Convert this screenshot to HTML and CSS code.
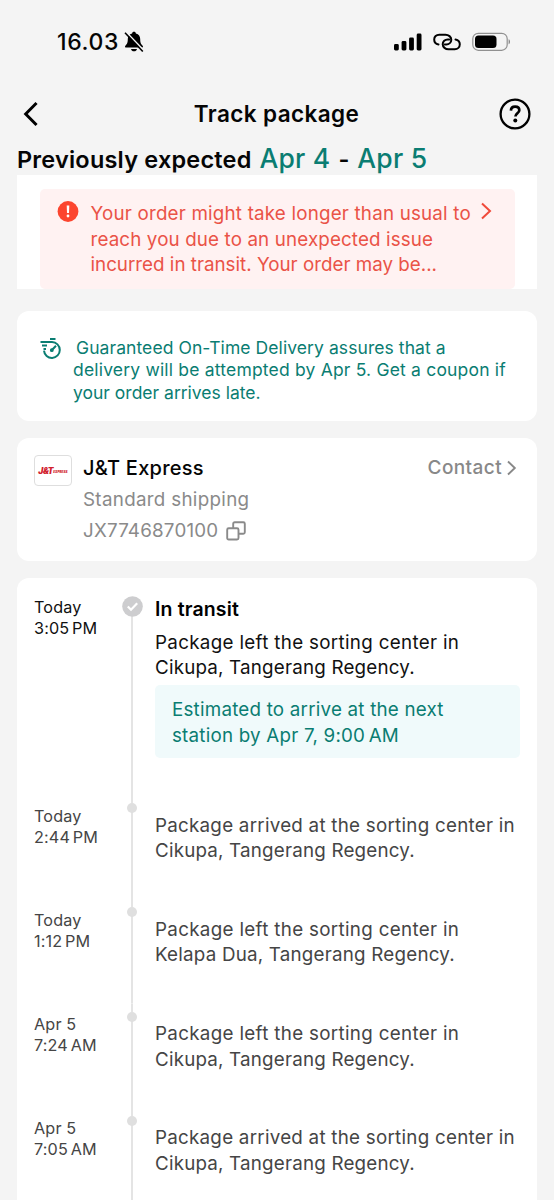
FILE: index.html
```html
<!DOCTYPE html>
<html lang="en">
<head>
<meta charset="utf-8">
<title>Track package</title>
<link rel="stylesheet" href="styles.css">
</head>
<body>
<header class="status">
  <span class="clock">16.03</span>
  <svg class="bell" width="20" height="22" viewBox="0 0 20 22"><path d="M10 .8c1.100 0 1.800.7 1.900 1.600 2.900.8 4.300 2.900 4.300 5.600 0 4 .9 5.200 2.500 6.800.6.800.2 1.800-.8 1.800H2.100c-1 0-1.400-1-.8-1.800C2.900 13.200 3.800 12 3.800 8c0-2.700 1.400-4.800 4.300-5.600.1-.9.800-1.600 1.900-1.600zM7 18h6c-.3 1.400-1.500 2.300-3 2.300S7.300 19.400 7 18z"/><path d="M2.200 1 20 19.700" stroke="#f4f4f4" stroke-width="1.500"/><path d="M1 1.700 18.800 20.500" stroke="#000" stroke-width="1.600"/></svg>
  <span class="spacer"></span>
  <svg width="28" height="18" viewBox="0 0 28 18"><rect x="0" y="11" width="4.800" height="6.500" rx="1.400"/><rect x="7.600" y="8" width="4.800" height="9.500" rx="1.400"/><rect x="15.100" y="4.500" width="4.800" height="13" rx="1.400"/><rect x="22.700" y=".500" width="4.800" height="17" rx="1.400"/></svg>
  <svg class="link" width="28" height="18" viewBox="0 0 28 18" fill="none" stroke="#000" stroke-width="2" stroke-linecap="round"><path d="M5.500 11.400C2.900 11 1.200 9.200 1.200 6.500 1.200 3.700 3.300 1.700 6.200 1.700h6.300c3 0 5.800 2.100 5.800 5 0 2.800-2.300 4.700-5 4.700h-1.600"/><path d="M22.500 6.400c2.500.5 4.300 2.100 4.300 4.900s-2.200 5-5 5h-6.300c-3 0-5.800-2.100-5.800-5 0-2.800 2.300-4.900 5-4.900h1.600"/></svg>
  <svg class="battery" width="39" height="20" viewBox="0 0 39 20"><rect x=".8" y="1.300" width="34.400" height="17" rx="5.500" fill="none" stroke="#909090" stroke-width="1.200"/><rect x="3" y="3.500" width="21.500" height="12.600" rx="3.500"/><path d="M36.600 7.300c1.800.5 1.800 4.500 0 5z" fill="#808080"/></svg>
</header>
<nav class="nav">
  <svg width="16" height="26" viewBox="0 0 16 26" fill="none" stroke="#000" stroke-width="3" stroke-linecap="square"><path d="M13.500 3 3.700 13l9.800 10"/></svg>
  <h1 class="title">Track package</h1>
  <svg width="32" height="32" viewBox="0 0 32 32" fill="none" stroke="#000"><circle cx="16" cy="16" r="14.400" stroke-width="2.300"/><path d="M11.900 12.600c.1-2.500 1.700-4 4.200-4s4.200 1.500 4.200 3.600c0 3-3.900 3.200-3.900 6.400" stroke-width="2.700"/><circle cx="16.300" cy="22.500" r="2" fill="#000" stroke="none"/></svg>
</nav>
<h2 class="expected"><span class="label">Previously expected</span> <span class="date">Apr 4</span> - <span class="date">Apr 5</span></h2>
<section class="alert-wrap">
  <div class="alert">
    <svg width="22" height="22" viewBox="0 0 22 22"><circle cx="11" cy="11.500" r="10.400" fill="#fc452f"/><path d="M9.700 5.500h2.600l-.3 7.400h-2z" fill="#fff"/><circle cx="11" cy="16" r="1.400" fill="#fff"/></svg>
    <p class="alert-text"><span class="line a1">Your order might take longer than usual to</span><span class="line a2">reach you due to an unexpected issue</span><span class="line a3">incurred in transit. Your order may be...</span></p>
    <svg width="12" height="20" viewBox="0 0 12 20" fill="none" stroke="#f04a3b" stroke-width="2"><path d="m2 3.500 8 7.500-8 7.500"/></svg>
  </div>
</section>
<section class="card guarantee">
  <svg width="22" height="21" viewBox="0 0 22 21" fill="none" stroke="#0a7d72" stroke-width="2"><path d="M10 1.100h5.500M.5 4.100H12a7.900 7.900 0 1 1-8 8.500M2 7.400h5M3.500 10.900h2.500M11.500 12.500l4.500-4.700"/><circle cx="11.800" cy="12.200" r=".9" fill="#0a7d72"/></svg>
  <p class="guarantee-text"><span class="line g1">Guaranteed On-Time Delivery assures that a</span><span class="line g2">delivery will be attempted by Apr 5. Get a coupon if</span><span class="line g3">your order arrives late.</span></p>
</section>
<section class="card carrier">
  <div class="logo"><b>J&amp;T</b><i>EXPRESS</i></div>
  <div class="carrier-info">
    <h3 class="name">J&amp;T Express</h3>
    <p class="service">Standard shipping</p>
    <p class="number"><span>JX7746870100</span><svg width="20" height="20" viewBox="0 0 20 20" fill="none" stroke="#8a8a8a" stroke-width="1.900"><rect x="1.200" y="7.200" width="11.300" height="11.300" rx="1.500"/><path d="M7.200 7V2.700c0-.9.600-1.500 1.500-1.500h8.600c.9 0 1.500.6 1.500 1.500v8.600c0 .9-.6 1.500-1.500 1.500h-4.500"/></svg></p>
  </div>
  <div class="contact"><span>Contact</span><svg width="10" height="16" viewBox="0 0 10 16" fill="none" stroke="#888" stroke-width="1.900"><path d="m1 1.500 6.800 6.500L1 14.500"/></svg></div>
</section>
<main class="card timeline">
  <article class="event current">
    <time class="when"><span class="line">Today</span><span class="line time">3:05 PM</span></time>
    <div class="rail"><svg class="check" width="21" height="21" viewBox="0 0 21 21"><circle cx="10.500" cy="10.500" r="10.300" fill="#cdcdcf"/><path d="m5.800 10.400 3.200 3.300 6.200-6.400" fill="none" stroke="#fff" stroke-width="2.200"/></svg></div>
    <div class="what">
      <h3 class="state">In transit</h3>
      <p><span class="line w-left">Package left the sorting center in</span><span class="line w-cik">Cikupa, Tangerang Regency.</span></p>
      <p class="estimate"><span class="line e1">Estimated to arrive at the next</span><span class="line e2">station by Apr 7, <span class="time">9:00 AM</span></span></p>
    </div>
  </article>
  <article class="event">
    <time class="when"><span class="line">Today</span><span class="line time">2:44 PM</span></time>
    <div class="rail"><i class="dot"></i></div>
    <p class="what"><span class="line w-arr">Package arrived at the sorting center in</span><span class="line w-cik">Cikupa, Tangerang Regency.</span></p>
  </article>
  <article class="event">
    <time class="when"><span class="line">Today</span><span class="line time">1:12 PM</span></time>
    <div class="rail"><i class="dot"></i></div>
    <p class="what"><span class="line w-left">Package left the sorting center in</span><span class="line w-kel">Kelapa Dua, Tangerang Regency.</span></p>
  </article>
  <article class="event">
    <time class="when"><span class="line">Apr 5</span><span class="line time">7:24 AM</span></time>
    <div class="rail"><i class="dot"></i></div>
    <p class="what"><span class="line w-left">Package left the sorting center in</span><span class="line w-cik">Cikupa, Tangerang Regency.</span></p>
  </article>
  <article class="event">
    <time class="when"><span class="line">Apr 5</span><span class="line time">7:05 AM</span></time>
    <div class="rail"><i class="dot"></i></div>
    <p class="what"><span class="line w-arr">Package arrived at the sorting center in</span><span class="line w-cik">Cikupa, Tangerang Regency.</span></p>
  </article>
</main>
</body>
</html>
```
FILE: styles.css
```css
* { box-sizing: border-box; }
body { margin: 0; height: 1200px; overflow: hidden; padding: 0 17px; background: #f4f4f4; color: #050505; font-family: Inter, "Liberation Sans", sans-serif; }
h1, h2, h3, p { margin: 0; }
svg { display: block; flex: none; }
.line { display: block; white-space: nowrap; }
.status { display: flex; align-items: center; height: 84px; padding: 0 26px 0 40px; }
.clock { font: 500 23px/30px Inter, sans-serif; letter-spacing: 0.6px; width: 67px; }
.spacer { flex: 1; }
.link { margin-left: 11px; }
.battery { margin-left: 11px; }
.nav { display: flex; align-items: center; justify-content: space-between; height: 60px; padding: 0 6px 0 5px; }
.title { font-size: 22.5px; line-height: 30px; font-weight: 600; letter-spacing: 0.4px; margin-left: 16px; }
.expected { display: flex; align-items: baseline; height: 32px; margin-top: -1px; font-size: 23.5px; line-height: 30px; font-weight: 600; gap: 8px; white-space: nowrap; }
.label { letter-spacing: 0.2px; }
.date { font-size: 26.5px; font-weight: 500; color: #0a7d72; letter-spacing: 0.2px; }
.alert-wrap { background: #fff; height: 114px; padding: 14px 22px 0 23px; }
.alert { display: flex; align-items: flex-start; height: 100px; padding: 11px 20px 0 17px; background: #fff2f2; border-radius: 5px; color: #ea5347; }
.alert-text { width: 389px; margin-left: 11.500px; font-size: 18.8px; line-height: 25.500px; padding-top: 1px; }
.a1 { letter-spacing: 0.19px; }
.a2 { letter-spacing: 0.13px; }
.card { background: #fff; border-radius: 12px; display: flex; align-items: flex-start; }
.guarantee { margin-top: 22px; height: 110px; padding: 25px 20px 0 23px; color: #0a7d72; }
.guarantee svg { margin-top: 2px; }
.guarantee-text { margin-left: 11px; font-size: 17.5px; line-height: 22.5px; padding-top: 0.5px; }
.g1 { padding-left: 3px; letter-spacing: 0.08px; }
.g2 { letter-spacing: 0.19px; }
.carrier { margin-top: 17px; height: 123px; padding: 17px 20px 0 17px; }
.logo { width: 38px; height: 31px; border: 1px solid #dedede; border-radius: 4px; display: flex; align-items: center; justify-content: center; color: #d1202c; font-style: italic; }
.logo b { font-size: 8.5px; font-weight: 900; letter-spacing: -0.5px; }
.logo i { font-size: 3.1px; font-weight: 900; padding-top: 3px; }
.carrier-info { flex: 1; margin-left: 11px; color: #8a8a8a; font-size: 18.8px; }
.name { font-size: 20px; line-height: 26px; font-weight: 500; color: #050505; letter-spacing: 0.25px; }
.service { line-height: 26px; margin-top: 6px; letter-spacing: 0.3px; }
.number { display: flex; align-items: center; gap: 8px; line-height: 26px; margin-top: 5px; letter-spacing: 0.2px; }
.contact { display: flex; align-items: center; gap: 5px; font-size: 19px; line-height: 26px; font-weight: 500; color: #888; letter-spacing: 0.4px; }
.timeline { margin-top: 17px; display: block; height: 660px; padding: 17px 17px 0; border-radius: 12px 12px 0 0; }
.event { display: flex; height: 104.300px; color: #454545; }
.when { width: 87px; padding-top: 10.600px; font-size: 16.2px; line-height: 21px; letter-spacing: 0.15px; }
.time { word-spacing: -2px; }
.rail { width: 22px; display: flex; flex-direction: column; align-items: center; background: linear-gradient(#e4e4e4, #e4e4e4) center / 2px 100% no-repeat; }
.dot { width: 10px; height: 10px; border-radius: 50%; background: #dfdfdf; margin-top: 8px; }
.check { margin-top: 1px; }
.what { flex: 1; margin-left: 12px; padding-top: 17.600px; font-size: 18.8px; line-height: 25.500px; }
.w-left { letter-spacing: 0.32px; }
.w-cik { letter-spacing: 0.19px; }
.w-arr { letter-spacing: 0.25px; }
.w-kel, .e1, .e2 { letter-spacing: 0.21px; }
.current { height: 200px; color: #111; }
.current .when { padding-top: 2px; }
.current .rail { background-position: center 12px; }
.current .what { padding-top: 0; }
.state { font-size: 19.5px; line-height: 26px; font-weight: 600; letter-spacing: 0.15px; margin-bottom: 8px; padding-top: 0.500px; color: #000; }
.estimate { height: 73px; margin-top: 4.500px; padding: 12px 17px 0; border-radius: 5px; background: #f0fafb; color: #0a7d72; }
```
